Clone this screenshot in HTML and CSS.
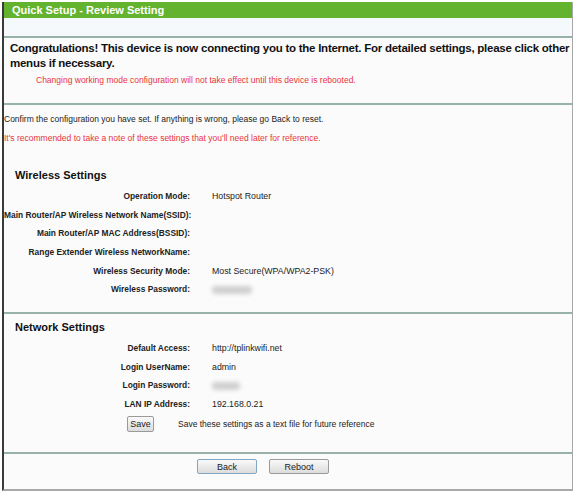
FILE: index.html
```html
<!DOCTYPE html>
<html>
<head>
<meta charset="utf-8">
<link rel="stylesheet" href="styles.css">
</head>
<body>
<div class="frame">
  <div class="title">Quick Setup - Review Setting</div>
  <div class="strip"></div>
  <div class="congrats">
    <p class="big">Congratulations! This device is now connecting you to the Internet. For detailed settings, please click other menus if necessary.</p>
    <p class="warn">Changing working mode configuration will not take effect until this device is rebooted.</p>
  </div>
  <div class="info">
    <p class="note">Confirm the configuration you have set. If anything is wrong, please go Back to reset.</p>
    <p class="note red">It's recommended to take a note of these settings that you'll need later for reference.</p>
    <h2 class="sect">Wireless Settings</h2>
    <div class="rows">
      <div class="lbl">Operation Mode:</div><div class="val">Hotspot Router</div>
      <div class="lbl">Main Router/AP Wireless Network Name(SSID):</div><div class="val"></div>
      <div class="lbl">Main Router/AP MAC Address(BSSID):</div><div class="val"></div>
      <div class="lbl">Range Extender Wireless NetworkName:</div><div class="val"></div>
      <div class="lbl">Wireless Security Mode:</div><div class="val">Most Secure(WPA/WPA2-PSK)</div>
      <div class="lbl">Wireless Password:</div><div class="val"><span class="blur w1"></span></div>
    </div>
  </div>
  <div class="net">
    <h2 class="sect">Network Settings</h2>
    <div class="rows">
      <div class="lbl">Default Access:</div><div class="val">http://tplinkwifi.net</div>
      <div class="lbl">Login UserName:</div><div class="val">admin</div>
      <div class="lbl">Login Password:</div><div class="val"><span class="blur w2"></span></div>
      <div class="lbl">LAN IP Address:</div><div class="val">192.168.0.21</div>
    </div>
    <div class="saverow">
      <button class="btn save">Save</button>
      <span class="savetext">Save these settings as a text file for future reference</span>
    </div>
  </div>
  <div class="footer">
    <button class="btn wide back">Back</button>
    <button class="btn wide">Reboot</button>
  </div>
</div>
</body>
</html>
```
FILE: styles.css
```css
html, body {
  margin: 0;
  padding: 0;
  background: #ffffff;
}
body {
  font-family: "Liberation Sans", Arial, sans-serif;
  color: #111;
}
.frame {
  width: 571px;
  margin: 2px 0 0 2px;
  border-left: 2px solid #3a3a3a;
  border-right: 1px solid #a8a8a8;
  border-bottom: 2px solid #a8a8a8;
  background: #fbfbfb;
  height: 489px;
  box-sizing: border-box;
  display: flex;
  flex-direction: column;
}
.title {
  height: 16px;
  background: #64b32e;
  color: #fff;
  font-weight: bold;
  font-size: 11px;
  line-height: 16px;
  padding-left: 8px;
}
.strip {
  height: 18px;
  background: #f6f9fc;
  border-bottom: 2px solid #98b2a8;
}
.congrats {
  padding: 3px 0 0 6px;
  box-sizing: border-box;
  height: 67px;
  border-bottom: 2px solid #98b2a8;
}
.big {
  margin: 0;
  font-size: 11.5px;
  letter-spacing: -0.25px;
  font-weight: bold;
  line-height: 15px;
  color: #111;
}
.warn {
  margin: 3px 0 0 26px;
  font-size: 8.5px;
  color: #e8343c;
  line-height: 12px;
}
.info {
  padding: 8px 0 0 0;
  height: 209px;
  box-sizing: border-box;
  border-bottom: 2px solid #98b2a8;
}
.note {
  margin: 0 0 6px 0;
  font-size: 8.5px;
  line-height: 13px;
  color: #222;
}
.note.red { color: #e8343c; }
.sect {
  margin: 23px 0 4px 11px;
  font-size: 11px;
  font-weight: bold;
  line-height: 15px;
}
.rows {
  display: grid;
  grid-template-columns: 186px auto;
  column-gap: 22px;
  grid-auto-rows: 18.6px;
  align-items: center;
}
.lbl {
  text-align: right;
  font-size: 8.4px;
  font-weight: bold;
  color: #222;
  white-space: nowrap;
}
.val {
  font-size: 8.8px;
  color: #222;
  white-space: nowrap;
}
.blur {
  display: inline-block;
  height: 8px;
  background: #cfcfcf;
  border-radius: 4px;
  filter: blur(2px);
  vertical-align: middle;
}
.w1 { width: 40px; }
.w2 { width: 28px; }
.net {
  padding: 3px 0 0 0;
  height: 140px;
  box-sizing: border-box;
  border-bottom: 2px solid #98b2a8;
}
.net .sect { margin-top: 3px; margin-bottom: 4px; }
.saverow {
  display: flex;
  align-items: center;
  margin: 3px 0 0 123px;
}
.btn {
  font-family: "Liberation Sans", Arial, sans-serif;
  font-size: 9px;
  color: #222;
  background: linear-gradient(#fafafa, #dcdcdc);
  border: 1px solid #9a9a9a;
  border-radius: 2px;
  padding: 0;
  height: 16px;
}
.save { width: 27px; }
.savetext {
  margin-left: 24px;
  font-size: 8.5px;
  color: #222;
}
.footer {
  display: flex;
  gap: 12px;
  padding: 5px 0 0 193px;
}
.wide { width: 60px; height: 15px; }
.back { border-color: #7fa6c4; }
```
